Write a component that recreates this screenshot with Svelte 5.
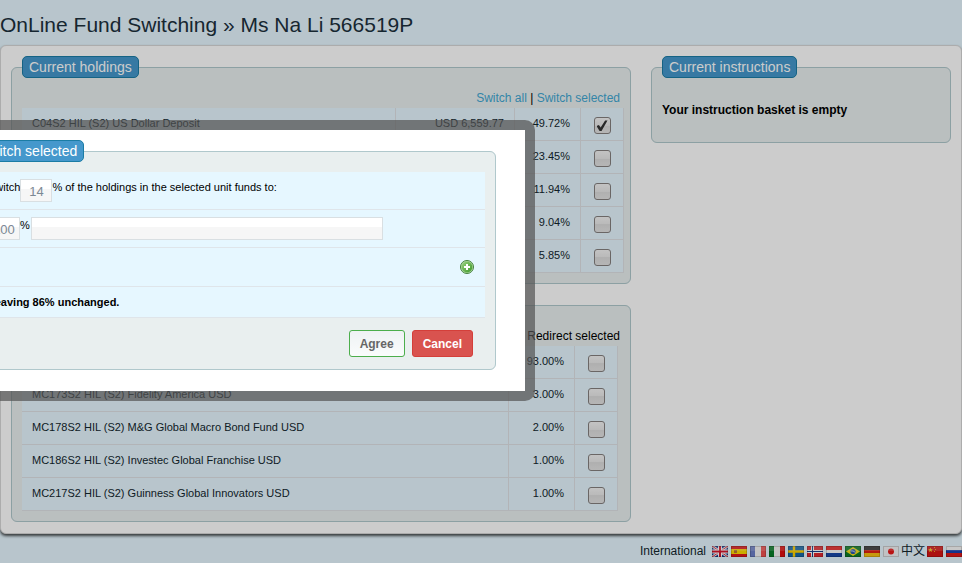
<script>
  let holdings = $state([
    { name: 'C04S2 HIL (S2) US Dollar Deposit', value: 'USD 6,559.77', share: '49.72%', checked: true },
    { name: '', value: '', share: '23.45%', checked: false },
    { name: '', value: '', share: '11.94%', checked: false },
    { name: '', value: '', share: '9.04%', checked: false },
    { name: '', value: '', share: '5.85%', checked: false }
  ]);
  let redirects = $state([
    { name: '', share: '93.00%', checked: false },
    { name: 'MC173S2 HIL (S2) Fidelity America USD', share: '3.00%', checked: false },
    { name: 'MC178S2 HIL (S2) M&G Global Macro Bond Fund USD', share: '2.00%', checked: false },
    { name: 'MC186S2 HIL (S2) Investec Global Franchise USD', share: '1.00%', checked: false },
    { name: 'MC217S2 HIL (S2) Guinness Global Innovators USD', share: '1.00%', checked: false }
  ]);
  let percent = $state('14');
  let portion = $state('100');
  let fund = $state('');
</script>

{#snippet flag(code)}
  <svg class="flag" width="16" height="11" viewBox="0 0 16 11" aria-hidden="true">
    {#if code === 'gb'}
      <rect width="16" height="11" fill="#1c3f94" />
      <path d="M0 0L16 11M16 0L0 11" stroke="#f4f4f8" stroke-width="2.6" />
      <path d="M0 0L16 11M16 0L0 11" stroke="#d8283c" stroke-width="1" />
      <path d="M8 0V11M0 5.5H16" stroke="#fff" stroke-width="4" />
      <path d="M8 0V11M0 5.5H16" stroke="#d8142c" stroke-width="2" />
    {:else if code === 'es'}
      <rect width="16" height="11" fill="#e01818" />
      <rect y="3" width="16" height="5" fill="#ffd800" />
      <rect x="3" y="4" width="3" height="3" fill="#b87830" />
    {:else if code === 'fr'}
      <rect width="16" height="11" fill="#f6f6f6" />
      <rect width="5" height="11" fill="#6d80c8" />
      <rect x="11" width="5" height="11" fill="#ee5050" />
    {:else if code === 'it'}
      <rect width="16" height="11" fill="#f6f6f6" />
      <rect width="5" height="11" fill="#087c28" />
      <rect x="11" width="5" height="11" fill="#e01010" />
    {:else if code === 'se'}
      <rect width="16" height="11" fill="#1668a8" />
      <path d="M6 0V11M0 5.5H16" stroke="#ffd200" stroke-width="2.4" />
    {:else if code === 'no'}
      <rect width="16" height="11" fill="#e02830" />
      <path d="M5.5 0V11M0 5.5H16" stroke="#fff" stroke-width="3" />
      <path d="M5.5 0V11M0 5.5H16" stroke="#183c88" stroke-width="1" />
    {:else if code === 'nl'}
      <rect width="16" height="11" fill="#fafafa" />
      <rect width="16" height="4" fill="#e82020" />
      <rect y="7" width="16" height="4" fill="#1848a8" />
    {:else if code === 'br'}
      <rect width="16" height="11" fill="#0c7c28" />
      <path d="M8 1L15 5.5L8 10L1 5.5Z" fill="#f4e020" />
      <circle cx="8" cy="5.5" r="2.6" fill="#2858b0" />
      <path d="M5.6 5Q8 4.4 10.3 6.3" stroke="#d8e8f8" stroke-width=".8" fill="none" />
    {:else if code === 'de'}
      <rect width="16" height="11" fill="#e02010" />
      <rect width="16" height="4" fill="#303030" />
      <rect y="7" width="16" height="4" fill="#f8c010" />
    {:else if code === 'jp'}
      <rect width="16" height="11" fill="#f2f2f4" />
      <circle cx="8" cy="5.5" r="3" fill="#e81818" />
    {:else if code === 'cn'}
      <rect width="16" height="11" fill="#d81414" />
      <path d="M3.5 1.5L4.2 3.2H6L4.6 4.3L5.1 6L3.5 5L1.9 6L2.4 4.3L1 3.2H2.8Z" fill="#f8c820" />
      <path d="M7 1h1v1h-1zM8 3h1v1h-1zM7 5h1v1h-1z" fill="#f0b020" />
    {:else}
      <rect width="16" height="11" fill="#f8f8f8" />
      <rect y="4" width="16" height="4" fill="#1840b0" />
      <rect y="7" width="16" height="4" fill="#e01818" />
    {/if}
    <path d="M0 3.5V0H16V5H0Z" fill="#fff" opacity=".14" />
    <rect x=".5" y=".5" width="15" height="10" fill="none" stroke="#000" stroke-opacity=".16" />
  </svg>
{/snippet}

<div class="page">
  <h1>OnLine Fund Switching » Ms Na Li 566519P</h1>

  <main>
    <div class="column">
      <fieldset>
        <legend>Current holdings</legend>
        <p class="actions"><a href="#all">Switch all</a> | <a href="#selected">Switch selected</a></p>
        <table class="funds wide">
          <tbody>
            {#each holdings as row}
              <tr>
                <td>{row.name}</td>
                <td class="amount">{row.value}</td>
                <td class="share">{row.share}</td>
                <td class="pick"><input type="checkbox" aria-label={row.name || row.share} bind:checked={row.checked} /></td>
              </tr>
            {/each}
          </tbody>
        </table>
      </fieldset>

      <fieldset class="untitled">
        <p class="actions">Redirect selected</p>
        <table class="funds narrow">
          <tbody>
            {#each redirects as row}
              <tr>
                <td>{row.name}</td>
                <td class="share">{row.share}</td>
                <td class="pick"><input type="checkbox" aria-label={row.name || row.share} bind:checked={row.checked} /></td>
              </tr>
            {/each}
          </tbody>
        </table>
      </fieldset>
    </div>

    <fieldset class="basket">
      <legend>Current instructions</legend>
      <p><strong>Your instruction basket is empty</strong></p>
    </fieldset>
  </main>

  <footer>
    <a class="intl" href="#international">International</a>
    {#each ['gb', 'es', 'fr', 'it', 'se', 'no', 'nl', 'br', 'de', 'jp'] as code}
      <a href="#{code}" aria-label={code}>{@render flag(code)}</a>
    {/each}
    <a class="zh" href="#zh">中文</a>
    {#each ['cn', 'ru'] as code}
      <a href="#{code}" aria-label={code}>{@render flag(code)}</a>
    {/each}
  </footer>
</div>

<div class="shade"></div>

<div class="dialog" role="dialog" aria-label="Switch selected">
  <form onsubmit={(e) => e.preventDefault()}>
    <fieldset>
      <legend>Switch selected</legend>
      <div class="line">
        <label for="percent">Switch</label>
        <input id="percent" class="small" bind:value={percent} />
        <span>% of the holdings in the selected unit funds to:</span>
      </div>
      <div class="line">
        <input id="portion" class="small" bind:value={portion} />
        <label for="portion">%</label>
        <input class="fund" aria-label="Fund" bind:value={fund} />
      </div>
      <div class="line add">
        <button type="button" class="plus" aria-label="Add">
          <svg width="14" height="14" viewBox="0 0 14 14" aria-hidden="true">
            <defs>
              <linearGradient id="leaf" x1="0" y1="0" x2="1" y2="1">
                <stop offset="0" stop-color="#98d080" />
                <stop offset="1" stop-color="#3c9828" />
              </linearGradient>
            </defs>
            <circle cx="7" cy="7" r="6.5" fill="#b4dca4" stroke="#43813c" stroke-width="1" />
            <circle cx="7" cy="7" r="5.4" fill="url(#leaf)" />
            <path d="M6 4h2v2h2v2h-2v2h-2v-2h-2v-2h2z" fill="#fff" />
          </svg>
        </button>
      </div>
      <div class="line rest"><strong>Leaving 86% unchanged.</strong></div>
      <div class="buttons">
        <button type="submit" class="agree">Agree</button>
        <button type="button" class="cancel">Cancel</button>
      </div>
    </fieldset>
  </form>
</div>

<style>
  :global(body) {
    background: #e6f7ff;
    overflow: hidden;
  }
  .page,
  .dialog {
    font: 11px/16px 'Liberation Sans', Arial, 'Noto Sans CJK SC', sans-serif;
    color: #000;
  }
  h1 {
    margin: 0;
    padding: 13px 0 8px;
    font-size: 21px;
    line-height: 24px;
    font-weight: normal;
    color: #1c303c;
  }
  main {
    display: grid;
    grid-template-columns: minmax(0, 1fr) 300px;
    gap: 20px;
    align-items: start;
    padding: 10px 10px 11px;
    background: #fff;
    border: 1px solid #d8d8d8;
    border-radius: 6px;
    box-shadow: 0 2px 3px rgba(0, 0, 0, 0.7);
  }
  fieldset {
    min-width: 0;
    margin: 0;
    padding: 12px 10px 10px;
    background: #e9efef;
    border: 1px solid #b0c8cc;
    border-radius: 6px;
  }
  legend {
    box-sizing: border-box;
    height: 22px;
    padding: 0 6px;
    font-size: 14px;
    line-height: 20px;
    color: #fff;
    background: #4598cc;
    border: 1px solid #1b7ca5;
    border-radius: 5px;
  }
  .untitled {
    margin-top: 21px;
    padding-top: 22px;
  }
  .actions {
    margin: 0 0 2px;
    font-size: 12px;
    text-align: right;
  }
  a {
    color: #42a7d2;
    text-decoration: none;
  }
  .funds {
    border-collapse: separate;
    border-spacing: 0;
    background: #e6f7ff;
    color: #12262e;
  }
  .wide {
    width: calc(100% + 4px);
  }
  .narrow {
    width: calc(100% - 2px);
  }
  td {
    box-sizing: border-box;
    height: 33px;
    padding: 7px 10px 0;
    vertical-align: top;
    border-right: 1px solid #dfe1e5;
    border-bottom: 1px solid #dfe1e5;
  }
  .amount {
    width: 119px;
    text-align: right;
  }
  .share {
    width: 66px;
    text-align: right;
  }
  .pick {
    width: 43px;
    padding: 9px 0 0;
    text-align: center;
  }
  .pick input {
    appearance: none;
    display: block;
    width: 17px;
    height: 17px;
    margin: 0 auto;
    border: 1px solid #85807f;
    border-radius: 3px;
    background: linear-gradient(#f4f4f4, #e8e8e8 50%, #dcdcdc 50%, #e4e4e4);
  }
  .pick input:checked::before {
    content: '';
    display: block;
    width: 11px;
    height: 11px;
    margin: 2px;
    background: #343434;
    clip-path: polygon(0 55%, 22% 45%, 38% 68%, 78% 5%, 100% 5%, 46% 100%, 28% 100%);
  }
  .basket {
    padding: 20px 10px;
  }
  .basket p {
    margin: 0;
    padding: 4px 0;
    font-size: 12px;
  }
  footer {
    display: flex;
    justify-content: flex-end;
    align-items: center;
    gap: 3px;
    padding-top: 9px;
    font-size: 12px;
  }
  footer a {
    color: #12262e;
  }
  .intl {
    margin-right: 3px;
  }
  .zh {
    margin: 0 -1px;
  }
  .flag {
    display: block;
  }
  .shade {
    position: fixed;
    inset: 0;
    background: rgba(0, 0, 0, 0.2);
  }
  .dialog {
    position: absolute;
    top: 120px;
    left: -77px;
    padding: 10px;
    background: rgba(82, 82, 82, 0.7);
    border-radius: 10px;
  }
  form {
    padding: 10px 29px 21px;
    background: #fff;
  }
  .dialog fieldset {
    padding: 10px 10px 12px;
  }
  .line {
    display: flex;
    align-items: flex-start;
    box-sizing: border-box;
    width: 512px;
    height: 38px;
    padding: 7px 15px 0;
    background: #e6f7ff;
    border-bottom: 1px solid #dfe5ea;
  }
  .line input {
    box-sizing: border-box;
    height: 23px;
    margin: 0;
    padding: 1px 4px 0;
    font: 13px/20px 'Liberation Sans', Arial, sans-serif;
    color: #7c8894;
    border: 1px solid #d9dfe2;
    background: linear-gradient(#fff 45%, #f6f6f6 45%);
  }
  .line .small {
    width: 32px;
    text-align: center;
    padding: 1px 0 0;
  }
  .line .fund {
    width: 352px;
    margin-left: 1px;
  }
  .add {
    justify-content: flex-end;
    height: 39px;
    padding: 12px 11px 0;
  }
  .plus {
    padding: 0;
    border: 0;
    background: none;
  }
  .plus svg {
    display: block;
  }
  .rest {
    height: 31px;
  }
  .buttons {
    display: flex;
    justify-content: flex-end;
    gap: 7px;
    padding: 12px 12px 0 0;
  }
  .agree,
  .cancel {
    height: 27px;
    padding: 0 10px;
    font: bold 12px/24px 'Liberation Sans', Arial, sans-serif;
    border-radius: 3px;
  }
  .agree {
    color: #666;
    background: linear-gradient(#eef2f4, #fafcfc);
    border: 1px solid #4cae4c;
  }
  .cancel {
    color: #fff;
    background: #d9534f;
    border: 1px solid #d43f3a;
  }
</style>
